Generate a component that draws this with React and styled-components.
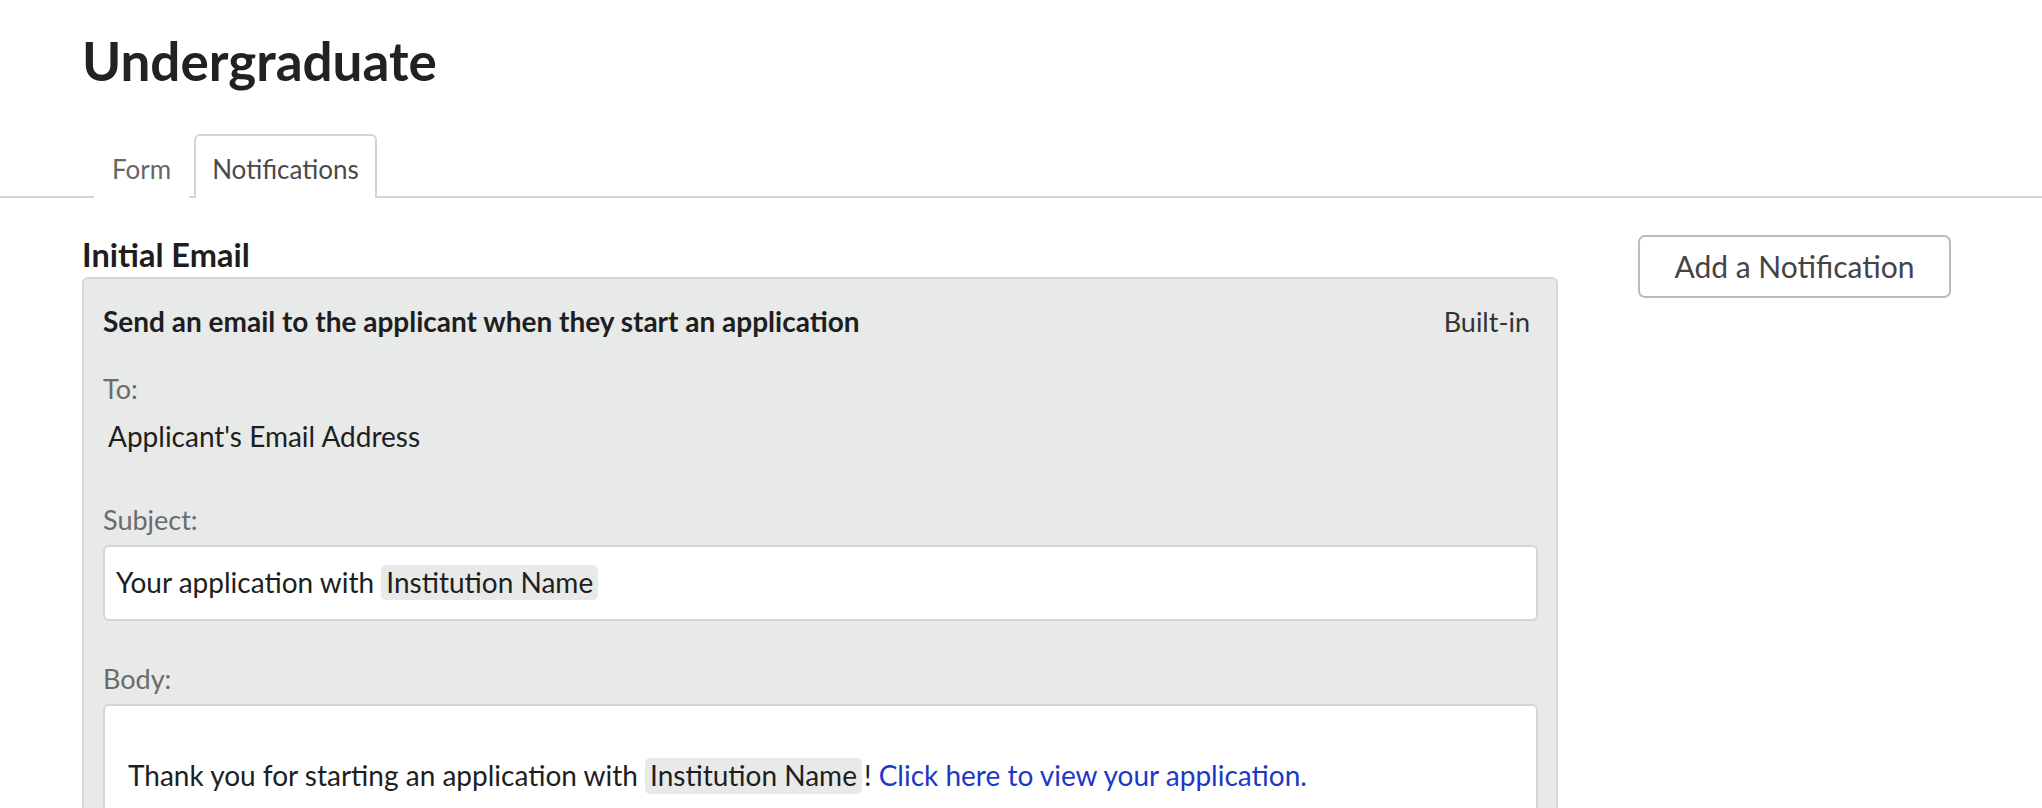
import React from 'react';
import styled, { createGlobalStyle } from 'styled-components';

const GlobalStyle = createGlobalStyle`
    body {
        margin: 0;
        background: #ffffff;
        font-family: Lato, "Open Sans", sans-serif;
        color: #1e1e1e;
    }
`;

export default function App() {
    return (
        <>
            <GlobalStyle />
            <PageHeader>
                <Title>Undergraduate</Title>
                <TabList>
                    <Tab>Form</Tab>
                    <Tab active>Notifications</Tab>
                </TabList>
            </PageHeader>
            <Content>
                <Main>
                    <SectionTitle>Initial Email</SectionTitle>
                    <Card>
                        <CardHeader>
                            <CardTitle>Send an email to the applicant when they start an application</CardTitle>
                            <Badge>Built-in</Badge>
                        </CardHeader>
                        <Label gap={35}>To:</Label>
                        <Recipient>Applicant's Email Address</Recipient>
                        <Label gap={51}>Subject:</Label>
                        <SubjectBox>
                            Your application with&nbsp;<Token>Institution Name</Token>
                        </SubjectBox>
                        <Label gap={42}>Body:</Label>
                        <BodyBox>
                            <BodyText>
                                Thank you for starting an application with <Token>Institution Name</Token>!{' '}
                                <BodyLink href="#">Click here to view your application.</BodyLink>
                            </BodyText>
                        </BodyBox>
                    </Card>
                </Main>
                <Side>
                    <AddButton>Add a Notification</AddButton>
                </Side>
            </Content>
        </>
    );
}

const PageHeader = styled("div")`
    border-bottom: 2px solid #d4d4d4;
`;

const Title = styled("h1")`
    margin: 0;
    padding: 29px 0 0 82px;
    font-size: 53px;
    line-height: 1.2;
    font-weight: 700;
    color: #222222;
`;

const TabList = styled("div")`
    display: flex;
    gap: 5px;
    margin-top: 41px;
    padding-left: 94px;
`;

const Tab = styled("div")`
    box-sizing: border-box;
    height: 64px;
    padding: 4px 16px 0;
    display: flex;
    align-items: center;
    font-size: 26px;
    color: ${props => props.active ? "#4a4a4a" : "#666666"};
    background: #ffffff;
    border: 2px solid ${props => props.active ? "#d4d4d4" : "transparent"};
    border-bottom: none;
    border-radius: 6px 6px 0 0;
    margin-bottom: -2px;
`;

const Content = styled("div")`
    display: flex;
    gap: 80px;
    padding: 37px 91px 0 82px;
    align-items: flex-start;
`;

const Main = styled("div")`
    flex: 1;
`;

const SectionTitle = styled("h2")`
    margin: 0 0 3px;
    font-size: 32.5px;
    line-height: 1.2;
    font-weight: 700;
    color: #1e1e1e;
`;

const Card = styled("div")`
    background: #e8e9e9;
    border: 2px solid #d6d6d6;
    border-radius: 6px;
    padding: 26px 18px 0 19px;
    height: 600px;
`;

const CardHeader = styled("div")`
    display: flex;
    justify-content: space-between;
    align-items: baseline;
    padding-right: 8px;
`;

const CardTitle = styled("div")`
    font-size: 28px;
    line-height: 1.2;
    font-weight: 700;
    color: #1e1e1e;
`;

const Badge = styled("div")`
    font-size: 27px;
    line-height: 1.2;
    color: #333333;
`;

const Label = styled("div")`
    margin-top: ${props => props.gap}px;
    font-size: 27px;
    line-height: 1.2;
    color: #6b6b6b;
`;

const Recipient = styled("div")`
    margin-top: 14px;
    padding-left: 5px;
    font-size: 28px;
    line-height: 1.2;
    color: #1e1e1e;
`;

const Field = styled("div")`
    margin-top: 9px;
    background: #ffffff;
    border: 2px solid #d6d6d6;
    border-radius: 6px;
    font-size: 28px;
    line-height: 1.2;
    color: #1e1e1e;
`;

const SubjectBox = styled(Field)`
    margin-top: 8px;
    height: 76px;
    box-sizing: border-box;
    display: flex;
    align-items: center;
    padding: 0 11px;
`;

const BodyBox = styled(Field)`
    padding: 0 23px;
    height: 300px;
`;

const BodyText = styled("p")`
    margin: 52px 0 0;
`;

const Token = styled("span")`
    display: inline-block;
    background: #e8e9e9;
    border-radius: 5px;
    padding: 1px 5px;
    margin-right: 2px;
`;

const BodyLink = styled("a")`
    color: #1d38c8;
    text-decoration: none;
`;

const Side = styled("div")`
    width: 313px;
`;

const AddButton = styled("button")`
    width: 100%;
    height: 63px;
    background: #ffffff;
    border: 2px solid #bbbbbb;
    border-radius: 7px;
    font-family: Lato, "Open Sans", sans-serif;
    font-size: 30px;
    color: #444444;
    cursor: pointer;
`;
